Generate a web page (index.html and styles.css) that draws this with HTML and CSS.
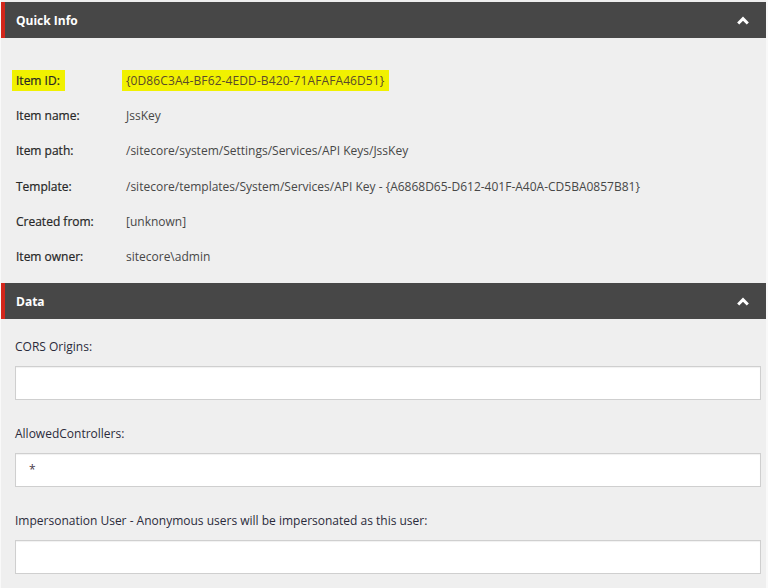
FILE: index.html
```html
<!DOCTYPE html>
<html>
<head>
<meta charset="utf-8">
<link rel="stylesheet" href="styles.css">
</head>
<body>
<div class="panel">
  <div class="section-head">
    <span class="section-title">Quick Info</span>
    <svg class="chev" width="12" height="9" viewBox="0 0 12 9"><path d="M1.2 7.5 L6 2.7 L10.8 7.5" fill="none" stroke="#fff" stroke-width="3"/></svg>
  </div>
  <div class="info">
    <div class="row"><span class="label"><span class="hl">Item ID:</span></span><span class="value"><span class="hl">{0D86C3A4-BF62-4EDD-B420-71AFAFA46D51}</span></span></div>
    <div class="row"><span class="label">Item name:</span><span class="value">JssKey</span></div>
    <div class="row"><span class="label">Item path:</span><span class="value">/sitecore/system/Settings/Services/API Keys/JssKey</span></div>
    <div class="row"><span class="label">Template:</span><span class="value">/sitecore/templates/System/Services/API Key - {A6868D65-D612-401F-A40A-CD5BA0857B81}</span></div>
    <div class="row"><span class="label">Created from:</span><span class="value">[unknown]</span></div>
    <div class="row"><span class="label">Item owner:</span><span class="value">sitecore\admin</span></div>
  </div>
  <div class="section-head">
    <span class="section-title">Data</span>
    <svg class="chev" width="12" height="9" viewBox="0 0 12 9"><path d="M1.2 7.5 L6 2.7 L10.8 7.5" fill="none" stroke="#fff" stroke-width="3"/></svg>
  </div>
  <div class="fields">
    <div class="field">
      <div class="field-label">CORS Origins:</div>
      <div class="input"></div>
    </div>
    <div class="field">
      <div class="field-label">AllowedControllers:</div>
      <div class="input">*</div>
    </div>
    <div class="field">
      <div class="field-label">Impersonation User - Anonymous users will be impersonated as this user:</div>
      <div class="input"></div>
    </div>
  </div>
</div>
</body>
</html>
```
FILE: styles.css
```css
html, body {
  margin: 0;
  padding: 0;
  height: 100%;
}
body {
  background: #f9f9f9;
  font-family: "Open Sans", "Noto Sans", sans-serif;
  font-size: 12px;
  color: #333;
  overflow: hidden;
}
.panel {
  margin: 0 2px 0 1px;
  min-height: 100%;
  background: #efefef;
  padding-top: 2px;
}
.section-head {
  height: 36px;
  background: #474747;
  border-left: 4px solid #d2261b;
  padding: 0 17px 0 11px;
  display: flex;
  align-items: center;
  justify-content: space-between;
}
.section-title {
  color: #fff;
  font-weight: 700;
  font-size: 12px;
}
.chev {
  display: block;
}
.info {
  padding: 25px 0 9px 15px;
}
.row {
  display: flex;
  height: 35.2px;
  align-items: center;
}
.label {
  width: 110px;
  flex: none;
  color: #262626;
  font-weight: 500;
  -webkit-text-stroke: 0.2px #262626;
}
.value {
  color: #474747;
}
.hl {
  background: #f1f100;
  padding: 2px 5px 2px 4px;
  margin-left: -4px;
}
.value .hl {
  color: #5a4a2a;
  letter-spacing: 0.1px;
}
.fields {
  padding: 19px 5px 0 14px;
  display: flex;
  flex-direction: column;
  gap: 25px;
}
.field-label {
  line-height: 18px;
  margin-bottom: 10px;
  color: #2b2b3b;
}
.input {
  height: 34px;
  box-sizing: border-box;
  background: #fff;
  border: 1px solid #cfcfcf;
  box-shadow: inset 0 1px 1px rgba(0,0,0,0.06);
  padding: 0 13px;
  line-height: 32px;
  color: #4a3a4a;
}
```
